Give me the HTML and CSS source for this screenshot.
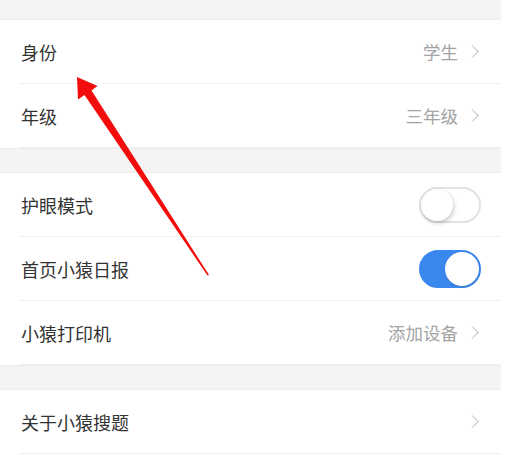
FILE: index.html
```html
<!DOCTYPE html>
<html lang="zh">
<head>
<meta charset="utf-8">
<link rel="stylesheet" href="styles.css">
</head>
<body>
<div class="page">
  <div class="gap gap-top"></div>
  <div class="group">
    <div class="row"><span class="label">身份</span><span class="value">学生</span><span class="chev"></span></div>
    <div class="row"><span class="label">年级</span><span class="value">三年级</span><span class="chev"></span></div>
  </div>
  <div class="gap"></div>
  <div class="group">
    <div class="row"><span class="label">护眼模式</span><span class="toggle"><span class="knob"></span></span></div>
    <div class="row"><span class="label">首页小猿日报</span><span class="toggle on"><span class="knob"></span></span></div>
    <div class="row"><span class="label">小猿打印机</span><span class="value">添加设备</span><span class="chev"></span></div>
  </div>
  <div class="gap"></div>
  <div class="group">
    <div class="row"><span class="label">关于小猿搜题</span><span class="value"></span><span class="chev"></span></div>
  </div>
</div>
<svg class="arrow" width="510" height="472" viewBox="0 0 510 472">
  <polygon points="77,77 97.5,86 91.5,90.5 209,275 207.5,275.5 84.5,95 78,99.5" fill="#f20c0c"/>
</svg>
</body>
</html>
```
FILE: styles.css
```css
html, body {
  margin: 0;
  padding: 0;
  background: #ffffff;
}
body {
  font-family: "Noto Sans CJK SC", "Noto Sans", sans-serif;
  position: relative;
  width: 510px;
  height: 472px;
  overflow: hidden;
}
.page {
  width: 501px;
}
.gap {
  height: 25px;
  background: #f4f4f4;
  border-top: 1px solid #ececec;
  border-bottom: 1px solid #ececec;
  box-sizing: border-box;
}
.gap-top {
  height: 20px;
  border-top: none;
}
.group {
  background: #fff;
}
.row {
  display: flex;
  align-items: center;
  height: 63px;
  margin-left: 19px;
  padding-left: 2px;
  padding-right: 21px;
  border-bottom: 1px solid #efefef;
}
.label {
  flex: 1;
  font-size: 18px;
  color: #333333;
}
.value {
  font-size: 17.5px;
  color: #a3a3a3;
  margin-right: 10px;
}
.chev {
  width: 8px;
  height: 8px;
  border-top: 1.5px solid #c4c4c4;
  border-right: 1.5px solid #c4c4c4;
  transform: rotate(45deg);
  margin-right: 3px;
}
.toggle {
  position: relative;
  width: 62px;
  height: 36px;
  border-radius: 18px;
  box-sizing: border-box;
  border: 2px solid #e2e2e2;
  background: #fff;
  margin-right: -1px;
}
.toggle .knob {
  position: absolute;
  left: 0;
  top: 0;
  width: 32px;
  height: 32px;
  border-radius: 50%;
  background: #fff;
  box-shadow: 1px 2px 4px rgba(0,0,0,0.22);
}
.toggle.on {
  background: #3a87ee;
  border-color: #3a87ee;
  height: 38px;
  border-radius: 19px;
}
.toggle.on .knob {
  left: auto;
  right: 0;
  width: 34px;
  height: 34px;
  box-shadow: 0 1px 2px rgba(0,0,0,0.15);
}
.arrow {
  position: absolute;
  left: 0;
  top: 0;
  pointer-events: none;
}
```
